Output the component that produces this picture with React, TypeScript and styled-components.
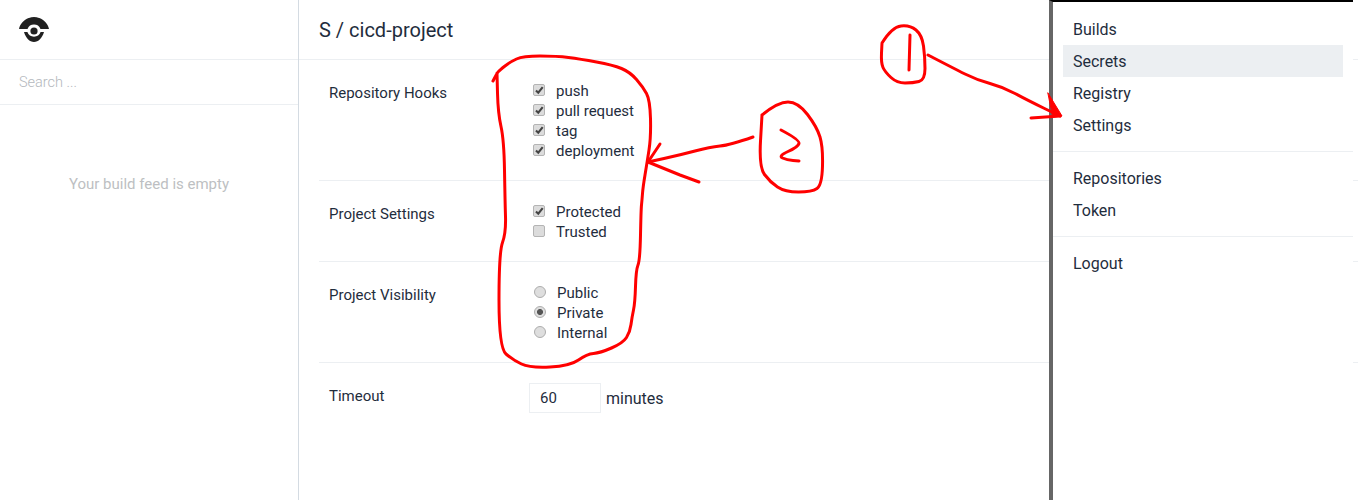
import * as React from 'react';
import styled, { createGlobalStyle } from 'styled-components';

const GlobalStyle = createGlobalStyle`
  html, body {
    margin: 0;
    padding: 0;
    background: #fff;
    color: #1f2d3d;
    font-family: Roboto, "Liberation Sans", sans-serif;
    font-size: 15px;
  }
`;

const Page = styled.div`
  position: relative;
  display: flex;
  width: 1358px;
  height: 500px;
  overflow: hidden;
`;

const Sidebar = styled.aside`
  flex: 0 0 298px;
  border-right: 1px solid #d4dbe2;
`;

const LogoBar = styled.div`
  height: 60px;
  padding: 17px 0 0 19px;
  box-sizing: border-box;
  border-bottom: 1px solid #eceff2;
`;

const SearchInput = styled.input`
  display: block;
  width: 100%;
  height: 45px;
  box-sizing: border-box;
  padding: 0 19px;
  border: 0;
  border-bottom: 1px solid #eceff2;
  outline: none;
  font: inherit;
  font-size: 14.5px;
  font-weight: 300;
  &::placeholder {
    color: #b4b8bd;
    opacity: 1;
  }
`;

const EmptyFeed = styled.div`
  margin-top: 69px;
  text-align: center;
  font-size: 15px;
  line-height: 20px;
  color: #bdbfc2;
`;

const Main = styled.main`
  flex: 1;
  min-width: 0;
`;

const Header = styled.header`
  height: 59px;
  padding-left: 20px;
  border-bottom: 1px solid #eceff2;
  font-size: 20px;
  line-height: 60px;
  color: #1f2d3d;
`;

const Row = styled.section`
  display: flex;
  margin-left: 20px;
  padding: 21px 0 19px 10px;
  border-bottom: 1px solid #eceff2;

  &:last-child {
    border-bottom: none;
  }
`;

const RowLabel = styled.div`
  flex: 0 0 200px;
  margin-top: 2px;
  font-size: 15px;
  line-height: 20px;
`;

const OptionList = styled.div`
  display: flex;
  flex-direction: column;
`;

const Option = styled.label`
  display: flex;
  align-items: center;
  height: 20px;
  font-size: 15px;
`;

const checkSvg =
  "data:image/svg+xml,%3Csvg xmlns='http://www.w3.org/2000/svg' viewBox='0 0 12 12'%3E%3Cpath d='M2.600 6.200 5 8.600 9.600 2.800' fill='none' stroke='%23444' stroke-width='2.200'/%3E%3C/svg%3E";

const CheckBox = styled.input.attrs({ type: 'checkbox' })`
  appearance: none;
  flex: none;
  width: 10px;
  height: 10px;
  margin: 0 11px 2px 4px;
  box-sizing: content-box;
  border: 1px solid #b4b4b4;
  border-radius: 2px;
  background: #dcdcdc;
  &:checked {
    background: #dcdcdc url("${checkSvg}") center / 11px 11px no-repeat;
  }
`;

const RadioDot = styled.input.attrs({ type: 'radio' })`
  appearance: none;
  flex: none;
  width: 10px;
  height: 10px;
  margin: 0 11px 2px 5px;
  box-sizing: content-box;
  border: 1px solid #adadad;
  border-radius: 50%;
  background: #dedede;
  &:checked {
    background: radial-gradient(circle, #555 0 2.600px, #dedede 3.400px);
  }
`;

const TimeoutControl = styled.div`
  display: flex;
  align-items: center;
  gap: 5px;
  margin-top: -1px;
  font-size: 16px;
`;

const TimeoutInput = styled.input`
  width: 72px;
  height: 30px;
  box-sizing: border-box;
  padding: 0 10px;
  border: 1px solid #eceff2;
  outline: none;
  font: inherit;
  font-size: 15px;
  color: inherit;
`;

const Drawer = styled.nav`
  position: absolute;
  top: 0;
  left: 1049px;
  bottom: 0;
  width: 304px;
  box-sizing: border-box;
  background: #fff;
  border-top: 2px solid #000;
  border-left: 4px solid #666;
`;

const MenuGroup = styled.div`
  padding: 10px;
  border-bottom: 1px solid #eceff2;

  &:first-child {
    padding-top: 11px;
  }

  &:last-child {
    border-bottom: none;
  }
`;

const MenuItem = styled.a<{ active?: boolean }>`
  display: block;
  height: 32px;
  padding-left: 10px;
  font-size: 16px;
  line-height: 34px;
  color: #1f2d3d;
  background: ${({ active }) => (active ? '#eceff2' : 'transparent')};
`;

const Scribble = styled.svg`
  position: absolute;
  inset: 0;
  pointer-events: none;
`;

const DroneLogo = () => (
  <svg width="30" height="25" viewBox="0 0 30 25" style={{ display: 'block' }}>
    <path d="M0 12C1.500 5 8 0 15 0s13.500 5 15 12H21.500a7 7 0 0 0-13 0z" fill="#212121" />
    <path d="M5 15h3.400a7 7 0 0 0 13.200 0H25c-1.800 6-5.500 10-10 10S6.800 21 5 15z" fill="#212121" />
    <circle cx="15" cy="14" r="3.600" fill="#212121" />
  </svg>
);

type Point = [number, number];

// rounds a pen stroke through the midpoints of its segments
const penPath = (points: Point[]) => {
  let d = `M${points[0][0]} ${points[0][1]}`;
  for (let i = 1; i < points.length - 1; i++) {
    const [x, y] = points[i];
    const [nx, ny] = points[i + 1];
    d += `Q${x} ${y} ${(x + nx) / 2} ${(y + ny) / 2}`;
  }
  const last = points[points.length - 1];
  return `${d}L${last[0]} ${last[1]}`;
};

const blob: Point[] = [
  [493, 81], [497, 73], [500, 70], [510, 62], [523, 56], [557, 56], [580, 59], [613, 65], [630, 72],
  [643, 87], [650, 100], [651, 137], [647, 163], [643, 187], [642, 200], [641, 210], [640, 260],
  [636, 270], [635, 303], [632, 317], [630, 332], [623, 343], [600, 353], [587, 354], [570, 366],
  [530, 368], [513, 360], [499, 348], [499, 252], [506, 233], [505, 200], [504, 140], [498, 113], [497, 73],
];
const arrowTwo: Point[] = [[753, 137], [730, 145], [710, 147], [680, 155], [648, 162]];
const circleTwo: Point[] = [
  [762, 115], [778, 102], [798, 102], [817, 127], [823, 147], [822, 185], [812, 192], [785, 192],
  [770, 182], [759, 167], [762, 115],
];
const digitTwo: Point[] = [[781, 130], [800, 140], [798, 147], [778, 156], [787, 160], [799, 161]];
const circleOne: Point[] = [
  [882, 43], [892, 27], [910, 25], [922, 35], [925, 57], [925, 80], [913, 83], [897, 83], [885, 72],
  [881, 63], [882, 43],
];
const arrowOne: Point[] = [[928, 55], [953, 68], [977, 80], [1003, 87], [1027, 100], [1060, 116]];

export default function App() {
  return (
    <Page>
      <GlobalStyle />
      <Sidebar>
        <LogoBar>
          <DroneLogo />
        </LogoBar>
        <SearchInput placeholder="Search ..." />
        <EmptyFeed>Your build feed is empty</EmptyFeed>
      </Sidebar>
      <Main>
        <Header>S / cicd-project</Header>
        <Row>
          <RowLabel>Repository Hooks</RowLabel>
          <OptionList>
            <Option><CheckBox defaultChecked />push</Option>
            <Option><CheckBox defaultChecked />pull request</Option>
            <Option><CheckBox defaultChecked />tag</Option>
            <Option><CheckBox defaultChecked />deployment</Option>
          </OptionList>
        </Row>
        <Row>
          <RowLabel>Project Settings</RowLabel>
          <OptionList>
            <Option><CheckBox defaultChecked />Protected</Option>
            <Option><CheckBox />Trusted</Option>
          </OptionList>
        </Row>
        <Row>
          <RowLabel>Project Visibility</RowLabel>
          <OptionList>
            <Option><RadioDot name="visibility" />Public</Option>
            <Option><RadioDot name="visibility" defaultChecked />Private</Option>
            <Option><RadioDot name="visibility" />Internal</Option>
          </OptionList>
        </Row>
        <Row>
          <RowLabel>Timeout</RowLabel>
          <TimeoutControl>
            <TimeoutInput defaultValue="60" />
            minutes
          </TimeoutControl>
        </Row>
      </Main>
      <Drawer>
        <MenuGroup>
          <MenuItem>Builds</MenuItem>
          <MenuItem active>Secrets</MenuItem>
          <MenuItem>Registry</MenuItem>
          <MenuItem>Settings</MenuItem>
        </MenuGroup>
        <MenuGroup>
          <MenuItem>Repositories</MenuItem>
          <MenuItem>Token</MenuItem>
        </MenuGroup>
        <MenuGroup>
          <MenuItem>Logout</MenuItem>
        </MenuGroup>
      </Drawer>
      <Scribble width="1358" height="500" fill="none" stroke="#f00" strokeWidth="3" strokeLinejoin="round" strokeLinecap="round">
        <path d={penPath(blob)} />
        <path d={penPath(arrowTwo)} />
        <polyline points="660,144 648,162 680,175 699,182" />
        <path d={penPath(circleTwo)} />
        <path d={penPath(digitTwo)} />
        <path d={penPath(circleOne)} />
        <polyline points="910,35 909,70" />
        <path d={penPath(arrowOne)} />
        <polyline points="1031,118 1060,116" />
        <polygon points="1048,93 1062,116 1053,117" fill="#f00" strokeWidth="1" />
      </Scribble>
    </Page>
  );
}
